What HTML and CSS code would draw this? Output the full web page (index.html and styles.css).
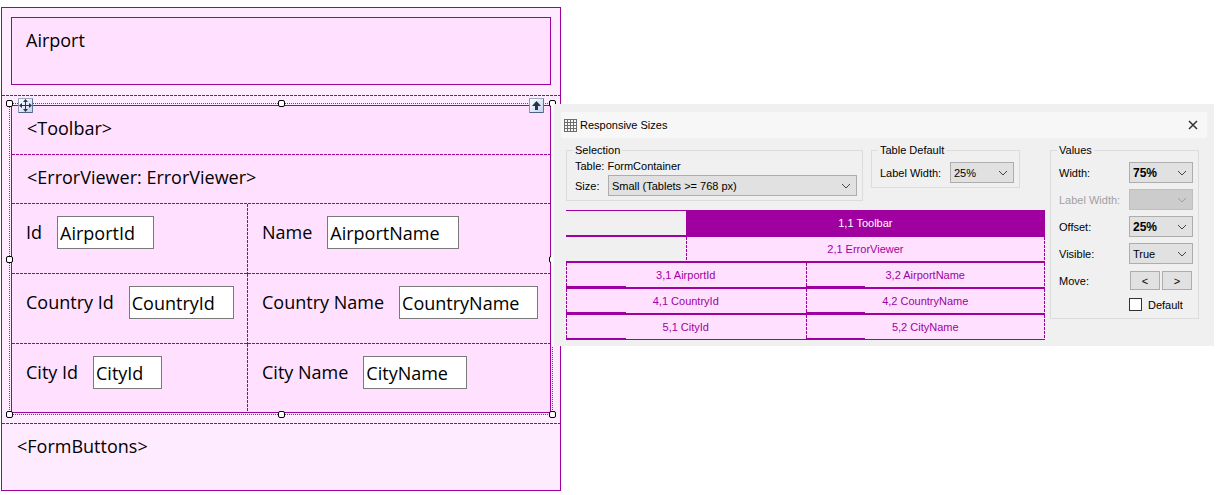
FILE: index.html
```html
<!DOCTYPE html>
<html lang="en">
<head>
<meta charset="utf-8">
<title>Responsive Sizes</title>
<link rel="stylesheet" href="styles.css">
</head>
<body>
<main class="designer">
  <section class="band band-head">
    <div class="title-box">Airport</div>
  </section>
  <section class="band band-form">
    <div class="frame">
      <div class="line">&lt;Toolbar&gt;</div>
      <div class="line">&lt;ErrorViewer: ErrorViewer&gt;</div>
      <div class="fields">
        <div class="field"><label for="airport-id">Id</label><input id="airport-id" type="text" value="AirportId"></div>
        <div class="field"><label for="airport-name">Name</label><input id="airport-name" type="text" value="AirportName"></div>
      </div>
      <div class="fields">
        <div class="field"><label for="country-id">Country Id</label><input id="country-id" type="text" value="CountryId"></div>
        <div class="field"><label for="country-name">Country Name</label><input id="country-name" type="text" value="CountryName"></div>
      </div>
      <div class="fields">
        <div class="field"><label for="city-id">City Id</label><input id="city-id" type="text" value="CityId"></div>
        <div class="field"><label for="city-name">City Name</label><input id="city-name" type="text" value="CityName"></div>
      </div>
      <div class="selection">
        <i class="handle top left"></i><i class="handle top center"></i><i class="handle top right"></i>
        <i class="handle middle left"></i><i class="handle middle right"></i>
        <i class="handle bottom left"></i><i class="handle bottom center"></i><i class="handle bottom right"></i>
        <button class="grip grip-move" aria-label="Move">
          <svg width="13" height="13" viewBox="0 0 13 13" fill="#2b3548"><path d="M6 2h1v9H6zM2 6h9v1H2z"/><path d="M6.500 0L9 3H4zM6.500 13L4 10h5zM0 6.500L3 4v5zM13 6.500L10 9V4z"/></svg>
        </button>
        <button class="grip grip-up" aria-label="Select parent">
          <svg width="13" height="13" viewBox="0 0 13 13" fill="#2b3548"><path d="M6.500 2L11 7H8v4H5V7H2z"/></svg>
        </button>
      </div>
    </div>
  </section>
  <section class="band-foot">&lt;FormButtons&gt;</section>
</main>

<section class="dialog" role="dialog" aria-labelledby="dialog-title">
  <header class="titlebar">
    <svg width="13" height="13" viewBox="0 0 13 13" fill="none" stroke="#6d6d6d"><path d="M0 .5h13M0 3.500h13M0 6.500h13M0 9.500h13M0 12.500h13M.5 0v13M3.500 0v13M6.500 0v13M9.500 0v13M12.500 0v13"/></svg>
    <h1 id="dialog-title">Responsive Sizes</h1>
    <button class="close" aria-label="Close"><svg width="10" height="10" viewBox="0 0 10 10" stroke="#333" stroke-width="1.500"><path d="M1 1l8 8M9 1L1 9"/></svg></button>
  </header>
  <div class="content">
    <div class="left-side">
      <div class="groups">
        <fieldset class="group group-selection">
          <legend>Selection</legend>
          <div class="caption">Table: FormContainer</div>
          <div class="size-row">
            <label for="size">Size:</label>
            <span class="combo"><select id="size"><option>Small (Tablets &gt;= 768 px)</option></select><svg width="10" height="6" viewBox="0 0 10 6"><path d="M1 1l4 4 4-4"/></svg></span>
          </div>
        </fieldset>
        <fieldset class="group group-default">
          <legend>Table Default</legend>
          <div class="row">
            <label for="default-width">Label Width:</label>
            <span class="combo"><select id="default-width"><option>25%</option></select><svg width="10" height="6" viewBox="0 0 10 6"><path d="M1 1l4 4 4-4"/></svg></span>
          </div>
        </fieldset>
      </div>
      <div class="preview">
        <div class="track"><div class="blank"></div><div class="cell wide active">1,1 Toolbar</div></div>
        <div class="track"><div class="blank"></div><div class="cell wide">2,1 ErrorViewer</div></div>
        <div class="track"><div class="cell half">3,1 AirportId</div><div class="cell half">3,2 AirportName</div></div>
        <div class="track"><div class="cell half">4,1 CountryId</div><div class="cell half">4,2 CountryName</div></div>
        <div class="track"><div class="cell half">5,1 CityId</div><div class="cell half">5,2 CityName</div></div>
      </div>
    </div>
    <fieldset class="group group-values">
      <legend>Values</legend>
      <div class="rows">
        <div class="row"><label for="width">Width:</label><span class="combo strong"><select id="width"><option>75%</option></select><svg width="10" height="6" viewBox="0 0 10 6"><path d="M1 1l4 4 4-4"/></svg></span></div>
        <div class="row disabled"><label for="label-width">Label Width:</label><span class="combo"><select id="label-width" disabled><option></option></select><svg width="10" height="6" viewBox="0 0 10 6"><path d="M1 1l4 4 4-4"/></svg></span></div>
        <div class="row"><label for="offset">Offset:</label><span class="combo strong"><select id="offset"><option>25%</option></select><svg width="10" height="6" viewBox="0 0 10 6"><path d="M1 1l4 4 4-4"/></svg></span></div>
        <div class="row"><label for="visible">Visible:</label><span class="combo"><select id="visible"><option>True</option></select><svg width="10" height="6" viewBox="0 0 10 6"><path d="M1 1l4 4 4-4"/></svg></span></div>
        <div class="row"><span>Move:</span><span class="moves"><button>&lt;</button><button>&gt;</button></span></div>
        <div class="row check-row"><label class="check"><input type="checkbox">Default</label></div>
      </div>
    </fieldset>
  </div>
</section>
</body>
</html>
```
FILE: styles.css
```css
:root {
  --line: #a000a0;
  --fill: #ffe0ff;
  --pale: #ffebff;
  --dash-x: repeating-linear-gradient(to right, var(--line) 0 3px, transparent 3px 4px);
  --dash-y: repeating-linear-gradient(to bottom, var(--line) 0 3px, transparent 3px 4px);
  --dot-x: repeating-linear-gradient(to right, #555 0 1px, transparent 1px 2px);
  --dot-y: repeating-linear-gradient(to bottom, #555 0 1px, transparent 1px 2px);
}

* { box-sizing: border-box; }

body {
  margin: 0;
  padding: 7px 5px 4px 1px;
  display: grid;
  grid-template-columns: minmax(0, 560fr) minmax(0, 653fr);
  align-items: start;
  background: #fff;
  color: #000;
}

/* Form designer */
.designer {
  border: 1px solid var(--line);
  background: var(--pale);
  font: 18px/27px "Open Sans", "Noto Sans", sans-serif;
}

.band {
  padding: 9px 9px 11px;
  background: var(--dash-x) bottom left / 100% 1px no-repeat;
}

.title-box {
  min-height: 68px;
  padding: 9px 14px;
  border: 1px solid var(--line);
  background: var(--fill);
}

.frame {
  position: relative;
  border: 1px solid var(--line);
  background: var(--fill);
}

.line {
  padding: 9px 15px 13px;
  background: var(--dash-x) bottom left / 100% 1px no-repeat;
}

.fields {
  display: grid;
  grid-template-columns: minmax(0, 236fr) minmax(0, 302fr);
  background: var(--dash-x) bottom left / 100% 1px no-repeat;
}

.fields:nth-of-type(5) { background: none; }

.field {
  display: flex;
  align-items: center;
  gap: 15px;
  padding: 12px 12px 25px 14px;
  white-space: nowrap;
}

.fields:nth-of-type(5) .field { padding-bottom: 23px; }

.field:first-child { background: var(--dash-y) top right / 1px 100% no-repeat; }

.field input {
  field-sizing: content;
  height: 33px;
  padding: 0 18px 0 2px;
  border: 1px solid #7a7a7a;
  background: #fff;
  color: inherit;
  font: inherit;
}

.band-foot {
  min-height: 66px;
  padding: 9px 15px;
}

.selection {
  position: absolute;
  inset: -3px;
  pointer-events: none;
  background:
    var(--dot-x) top left / 100% 1px no-repeat,
    var(--dot-x) bottom left / 100% 1px no-repeat,
    var(--dot-y) top left / 1px 100% no-repeat,
    var(--dot-y) top right / 1px 100% no-repeat;
}

.handle {
  position: absolute;
  width: 7px;
  height: 7px;
  border: 1px solid #000;
  border-radius: 2px;
  background: #fff;
}

.top { top: -3px; }
.middle { top: calc(50% - 3px); }
.bottom { bottom: -3px; }
.left { left: -3px; }
.center { left: calc(50% - 3px); }
.right { right: -3px; }

.grip {
  position: absolute;
  top: -5px;
  width: 15px;
  height: 15px;
  padding: 0;
  border: 1px solid #7386a5;
  border-color: #9aa8c0 #5f7496 #4f6284 #8c9cb8;
  border-radius: 1px;
  background: linear-gradient(135deg, #fff, #c3d3f3);
}

.grip svg { display: block; }
.grip-move { left: 9px; }
.grip-up { right: 9px; }

/* Responsive sizes window */
.dialog {
  position: relative;
  margin: 97px 0 0 -10px;
  padding: 8px 7px 6px;
  border-left: 3px solid #fafafa;
  background: #f0f0f0;
  font: 11px/14px "Liberation Sans", Arial, sans-serif;
}

.titlebar {
  display: flex;
  align-items: center;
  gap: 3px;
  height: 26px;
  padding: 0 9px 0 3px;
  background: #f7f7f7;
}

.titlebar h1 {
  flex: 1;
  margin: 0;
  font-size: 11px;
  font-weight: normal;
}

.close {
  display: flex;
  padding: 0;
  border: 0;
  background: none;
}

.content {
  display: flex;
  align-items: flex-start;
  gap: 5px;
  padding: 5px 8px 0 5px;
}

.left-side { flex: 1; min-width: 0; }

.groups {
  display: flex;
  align-items: flex-start;
  gap: 8px;
  padding-right: 25px;
  margin-bottom: 9px;
}

.group {
  min-width: 0;
  margin: 0;
  padding: 5px 5px 4px 8px;
  border: 1px solid #dcdcdc;
}

.group legend {
  margin-left: -2px;
  padding: 0 2px;
}

.group-selection { flex: 1; padding-top: 2px; }
.group-default, .group-values { width: 149px; }
.group-values { padding-bottom: 6px; }

.caption { margin-bottom: 2px; }

.size-row {
  display: grid;
  grid-template-columns: 33px 1fr;
  align-items: center;
}

.row {
  display: grid;
  grid-template-columns: 1fr 64px;
  align-items: center;
  height: 21px;
  white-space: nowrap;
}

.rows {
  display: grid;
  gap: 6px;
}

.combo {
  display: grid;
  grid-template-columns: 1fr 20px;
  align-items: center;
  height: 21px;
  border: 1px solid #adadad;
  background: #e1e1e1;
}

.combo select {
  grid-area: 1 / 1 / 2 / 3;
  width: 100%;
  height: 100%;
  padding: 0 20px 0 3px;
  border: 0;
  appearance: none;
  background: none;
  color: #000;
  font: inherit;
}

.combo svg {
  grid-area: 1 / 2 / 2 / 3;
  margin-left: 5px;
  pointer-events: none;
  fill: none;
  stroke: #444;
}

.strong { font-weight: bold; font-size: 12px; }
.disabled { color: #a0a0a0; }
.disabled .combo { background: #ccc; border-color: #bfbfbf; }
.disabled svg { stroke: #a0a0a0; }

.moves {
  display: grid;
  grid-template-columns: 1fr 1fr;
  gap: 2px;
  padding: 0 1px;
}

.moves button {
  height: 19px;
  padding: 0;
  border: 1px solid #adadad;
  background: #e1e1e1;
  font: inherit;
}

.check-row { height: 15px; }

.check {
  grid-column: 2;
  display: flex;
  align-items: center;
  gap: 6px;
}

.check input {
  appearance: none;
  width: 13px;
  height: 13px;
  margin: 0;
  border: 1px solid #333;
  background: #fff;
}

.track {
  display: flex;
  border: solid var(--line);
  border-width: 1px 0;
}

.blank { width: 25%; }

.cell {
  position: relative;
  padding: 5px 0;
  background:
    var(--dash-y) top left / 1px 100% no-repeat,
    var(--fill);
  color: var(--line);
  text-align: center;
}

.cell:last-child {
  background:
    var(--dash-y) top left / 1px 100% no-repeat,
    var(--dash-y) top right / 1px 100% no-repeat,
    var(--fill);
}

.wide { width: 75%; }
.half { width: 50%; }

.half::after {
  content: "";
  position: absolute;
  left: 0;
  bottom: 0;
  width: 25%;
  height: 1px;
  background: var(--line);
}

.track .active {
  background: var(--line);
  color: #fff;
}

.track .active:last-child { background: var(--line); }
```
